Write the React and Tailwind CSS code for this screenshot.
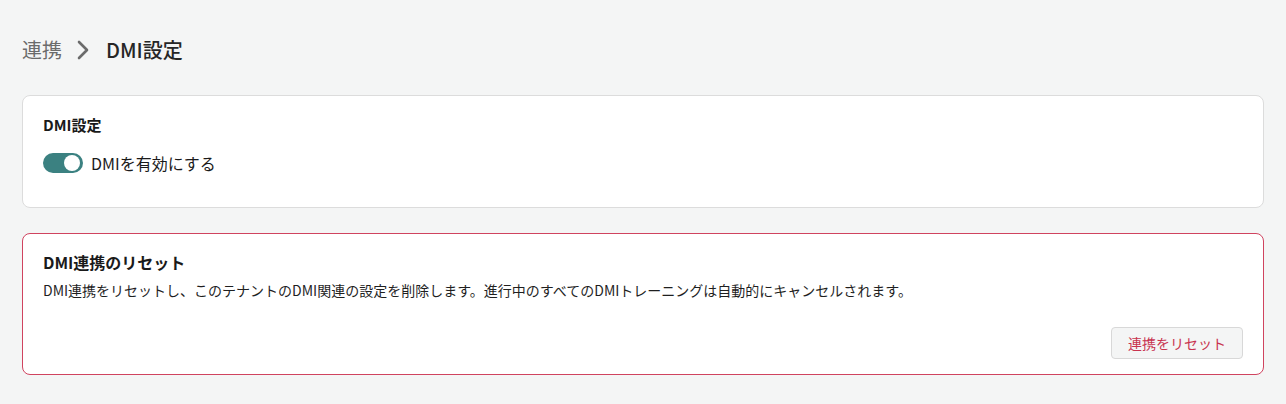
export default function App() {
  return (
    <div
      className="min-h-[404px] bg-[#f4f5f5] px-[22px] pt-[36px] pb-[28px] text-[#1a1a1a]"
      style={{ fontFamily: '"Noto Sans CJK JP", "Noto Sans", sans-serif' }}
    >
      {/* Breadcrumb */}
      <div className="flex items-center h-[28px] text-[20px]">
        <span className="text-[#6b6b6b]">連携</span>
        <svg
          className="ml-[15px] mr-[17px]"
          width="12"
          height="20"
          viewBox="0 0 12 20"
          fill="none"
        >
          <path d="M2 2l8 8-8 8" stroke="#6b6b6b" strokeWidth="2.6" strokeLinecap="round" strokeLinejoin="round" />
        </svg>
        <span className="font-medium text-[#262626]">DMI設定</span>
      </div>

      {/* DMI settings card */}
      <div className="mt-[31px] h-[113px] rounded-[8px] border border-[#dcdcdc] bg-white px-[20px] pt-[18px]">
        <div className="text-[15px] font-bold leading-[22px]">DMI設定</div>
        <label className="mt-[16px] flex items-center gap-[8px]">
          <span className="relative inline-block h-[20px] w-[40px] rounded-full bg-[#3b8181]">
            <span className="absolute right-[3px] top-[2px] h-[16px] w-[16px] rounded-full bg-white" />
          </span>
          <span className="text-[16px] leading-[22px]">DMIを有効にする</span>
        </label>
      </div>

      {/* Reset card */}
      <div className="mt-[25px] h-[142px] rounded-[8px] border border-[#d0435f] bg-white px-[20px] pt-[16px]">
        <div className="text-[16px] font-bold leading-[24px]">DMI連携のリセット</div>
        <p className="mt-[6px] text-[14px] leading-[20px] text-[#1f1f1f]">
          DMI連携をリセットし、このテナントのDMI関連の設定を削除します。進行中のすべてのDMIトレーニングは自動的にキャンセルされます。
        </p>
        <div className="mt-[27px] flex justify-end">
          <button className="h-[32px] w-[132px] rounded-[4px] border border-[#d8d8d8] bg-[#f4f5f5] text-[14px] text-[#c8334f]">
            連携をリセット
          </button>
        </div>
      </div>
    </div>
  )
}
